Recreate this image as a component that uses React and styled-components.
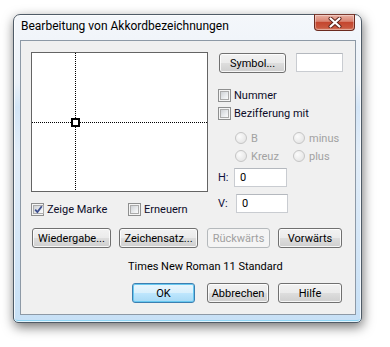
import React from 'react';
import styled, { createGlobalStyle, css } from 'styled-components';

const GlobalStyle = createGlobalStyle`
  html, body {
    margin: 0;
    padding: 0;
    background: #ffffff;
  }
  body {
    font-family: Roboto, "Noto Sans", sans-serif;
    font-size: 11px;
    color: #000;
  }
  * { box-sizing: border-box; }
`;

const Page = styled.div`
  width: 390px;
  height: 347px;
  padding: 14px 0 0 13px;
`;

const Window = styled.div`
  width: 349px;
  height: 309px;
  border: 1px solid #4f5b67;
  border-radius: 7px 7px 5px 5px;
  background: linear-gradient(
    180deg,
    #f4f7fb 0%,
    #ebf1f8 22%,
    #d3e5f7 30%,
    #e2edf8 45%,
    #d4e6f7 75%,
    #c7e0f6 100%
  );
  box-shadow: 1px 4px 12px rgba(0, 0, 0, 0.55),
    inset 0 0 0 1px rgba(255, 255, 255, 0.75),
    inset 0 -2px 0 #8ed4f4;
  display: flex;
  flex-direction: column;
`;

const TitleBar = styled.div`
  height: 25px;
  display: flex;
  align-items: flex-start;
  justify-content: space-between;
  padding-left: 7px;
`;

const TitleText = styled.div`
  line-height: 22px;
  font-size: 12px;
  color: #000;
`;

const CloseButton = styled.div`
  width: 41px;
  height: 17px;
  margin-top: -1px;
  margin-right: 6px;
  border: 1px solid #6b2a1f;
  border-top-color: #7a3a30;
  border-radius: 0 0 4px 4px;
  background: linear-gradient(
    180deg,
    #eab0a2 0%,
    #d98472 42%,
    #c4462f 50%,
    #c9583f 85%,
    #d9866f 100%
  );
  box-shadow: inset 0 0 0 1px rgba(255, 255, 255, 0.35);
  display: flex;
  align-items: center;
  justify-content: center;
`;

const Client = styled.div`
  margin: 0 5px 0 6px;
  height: 275px;
  border: 1px solid #8d99a6;
  background: #f0f0f0;
  padding: 11px 13px 0 10px;
  display: flex;
  flex-direction: column;
`;

const TopSection = styled.div`
  display: flex;
  gap: 10px;
`;

const LeftColumn = styled.div`
  width: 177px;
  display: flex;
  flex-direction: column;
`;

const Canvas = styled.div`
  width: 177px;
  height: 140px;
  border: 1px solid #646464;
  background: #fff;
  svg {
    display: block;
  }
`;

const CheckRow = styled.div`
  display: flex;
  margin-top: 11px;
`;

const RightColumn = styled.div`
  display: flex;
  flex-direction: column;
`;

const SymbolRow = styled.div`
  display: flex;
  align-items: flex-start;
  gap: 10px;
  margin: 1px 0 0 1px;
`;

const TextBox = styled.div`
  width: ${p => p.w}px;
  height: 19px;
  border: 1px solid #c9ccd1;
  border-top-color: #b4b8be;
  background: #fff;
  line-height: 17px;
  padding-left: 5px;
`;

const CheckItem = styled.label`
  display: flex;
  align-items: center;
  gap: 3px;
  height: 13px;
  width: ${p => (p.w ? `${p.w}px` : 'auto')};
  margin-top: ${p => p.mt || 0}px;
  line-height: 13px;
  white-space: nowrap;
  color: #0c0c28;
`;

const Box = styled.span`
  width: 13px;
  height: 13px;
  flex: none;
  border: 1px solid #8e8f8f;
  background: #f4f4f4;
  padding: 1px;
  display: flex;
  span {
    flex: 1;
    border: 1px solid #ababab;
    background: linear-gradient(135deg, #cfd2d6 0%, #eef0f2 70%, #fbfbfb 100%);
    display: flex;
    align-items: center;
    justify-content: center;
  }
`;

const RadioGrid = styled.div`
  display: grid;
  grid-template-columns: 58px auto;
  row-gap: 6px;
  margin: 12px 0 0 17px;
`;

const RadioItem = styled.div`
  display: flex;
  align-items: center;
  gap: 4px;
  height: 12px;
  color: #a2a2a2;
`;

const RadioDot = styled.span`
  width: 12px;
  height: 12px;
  border-radius: 50%;
  border: 1px solid #c5c5c5;
  background: radial-gradient(circle at 35% 35%, #fbfbfb 0%, #e8e8e8 70%, #dedede 100%);
  flex: none;
`;

const FieldRow = styled.div`
  display: flex;
  align-items: center;
  margin-top: ${p => p.mt}px;
`;

const FieldLabel = styled.span`
  width: ${p => p.w}px;
  color: #101040;
`;

const ButtonRow = styled.div`
  display: flex;
  margin: 12px 0 0 1px;
`;

const Button = styled.div`
  width: ${p => p.w}px;
  height: 20px;
  margin-left: ${p => p.ml || 0}px;
  border: 1px solid #707070;
  border-radius: 3px;
  background: linear-gradient(180deg, #f2f2f2 0%, #ebebeb 48%, #dddddd 52%, #cfcfcf 100%);
  box-shadow: inset 0 0 0 1px rgba(255, 255, 255, 0.8);
  display: flex;
  align-items: center;
  justify-content: center;
  line-height: 1;
  color: #000;
  white-space: nowrap;

  ${p => p.disabled && css`
    border-color: #b5b9bc;
    background: #f4f4f4;
    box-shadow: none;
    color: #a0a0a0;
  `}

  ${p => p.primary && css`
    border-color: #3c7fb1;
    background: linear-gradient(180deg, #eaf6fd 0%, #d9f0fc 48%, #bee6fd 52%, #a7d9f5 100%);
    box-shadow: inset 0 0 0 1px #68c8f0;
  `}
`;

const StatusText = styled.div`
  margin: 12px 0 0 97px;
  height: 14px;
  line-height: 14px;
`;

const FooterRow = styled.div`
  display: flex;
  justify-content: flex-end;
  margin-top: 9px;
`;

const CheckBox = ({ checked }) => (
  <Box>
    <span>
      {checked && (
        <svg width="9" height="9" viewBox="0 0 9 9">
          <path d="M1.2 4.6 L3.4 7 L7.8 1.2" fill="none" stroke="#3d4f8f" strokeWidth="1.8" />
        </svg>
      )}
    </span>
  </Box>
);

const Radio = ({ label }) => (
  <RadioItem>
    <RadioDot />
    {label}
  </RadioItem>
);

const Crosshair = () => (
  <svg width="175" height="138" viewBox="0 0 175 138">
    <line x1="43.5" y1="0" x2="43.5" y2="138" stroke="#000" strokeWidth="1" strokeDasharray="1 1" />
    <line x1="0" y1="69.5" x2="175" y2="69.5" stroke="#000" strokeWidth="1" strokeDasharray="1 1" />
    <rect x="40" y="66" width="7" height="7" fill="#fff" stroke="#000" strokeWidth="2" />
  </svg>
);

const CloseGlyph = () => (
  <svg width="14" height="11" viewBox="0 0 14 11">
    <path d="M2.5 1.5 L11.5 9.5 M11.5 1.5 L2.5 9.5" stroke="#5a2018" strokeWidth="4" strokeLinecap="round" />
    <path d="M2.5 1.5 L11.5 9.5 M11.5 1.5 L2.5 9.5" stroke="#ffffff" strokeWidth="2.2" strokeLinecap="round" />
  </svg>
);

export default function App() {
  return (
    <>
      <GlobalStyle />
      <Page>
        <Window>
          <TitleBar>
            <TitleText>Bearbeitung von Akkordbezeichnungen</TitleText>
            <CloseButton>
              <CloseGlyph />
            </CloseButton>
          </TitleBar>
          <Client>
            <TopSection>
              <LeftColumn>
                <Canvas>
                  <Crosshair />
                </Canvas>
                <CheckRow>
                  <CheckItem w={97}>
                    <CheckBox checked />
                    Zeige Marke
                  </CheckItem>
                  <CheckItem>
                    <CheckBox />
                    Erneuern
                  </CheckItem>
                </CheckRow>
              </LeftColumn>
              <RightColumn>
                <SymbolRow>
                  <Button w={67}>Symbol...</Button>
                  <TextBox w={47} />
                </SymbolRow>
                <CheckItem mt={16}>
                  <CheckBox />
                  Nummer
                </CheckItem>
                <CheckItem mt={5}>
                  <CheckBox />
                  Bezifferung mit
                </CheckItem>
                <RadioGrid>
                  <Radio label="B" />
                  <Radio label="minus" />
                  <Radio label="Kreuz" />
                  <Radio label="plus" />
                </RadioGrid>
                <FieldRow mt={6}>
                  <FieldLabel w={16}>H:</FieldLabel>
                  <TextBox w={53}>0</TextBox>
                </FieldRow>
                <FieldRow mt={7}>
                  <FieldLabel w={18}>V:</FieldLabel>
                  <TextBox w={52}>0</TextBox>
                </FieldRow>
              </RightColumn>
            </TopSection>
            <ButtonRow>
              <Button w={79}>Wiedergabe...</Button>
              <Button w={79} ml={8}>Zeichensatz...</Button>
              <Button w={63} ml={9} disabled>Rückwärts</Button>
              <Button w={64} ml={8}>Vorwärts</Button>
            </ButtonRow>
            <StatusText>Times New Roman 11 Standard</StatusText>
            <FooterRow>
              <Button w={63} primary>OK</Button>
              <Button w={62} ml={12}>Abbrechen</Button>
              <Button w={64} ml={9}>Hilfe</Button>
            </FooterRow>
          </Client>
        </Window>
      </Page>
    </>
  );
}
